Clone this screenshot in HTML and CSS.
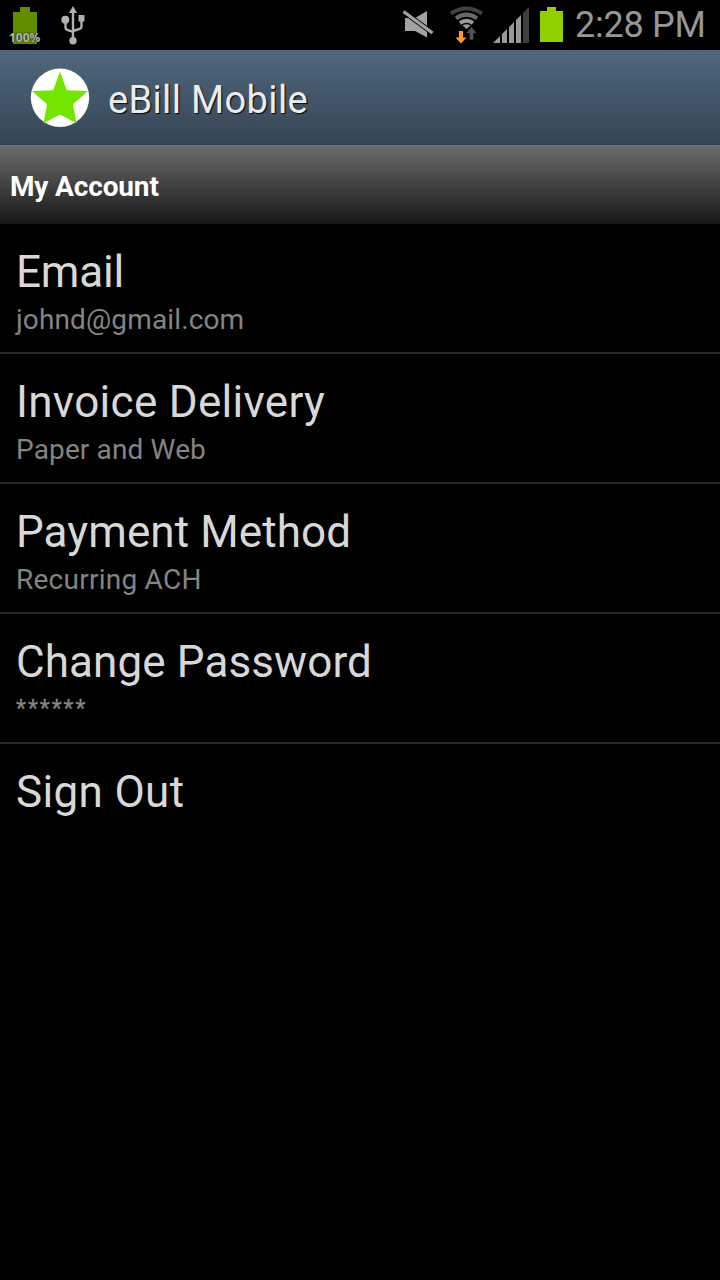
FILE: index.html
```html
<!DOCTYPE html>
<html lang="en">
<head>
<meta charset="utf-8">
<title>eBill Mobile</title>
<link rel="stylesheet" href="styles.css">
</head>
<body>
<div class="status">
  <div class="battery-level">
    <svg width="30" height="50" viewBox="0 0 30 50"><path fill="#628f00" d="M3 12h7V7h10v5h7v32H3z"/></svg>
    <span class="percent">100%</span>
  </div>
  <svg class="usb" width="28" height="50" viewBox="0 0 28 50">
    <g fill="none" stroke="#b0b0b0" stroke-width="2.400"><path d="M14 12v28M6.500 21v6.500q0 1.800 1.800 2.300l5.700 2M22.500 18v8.500q0 1.800-1.800 2.300L14 31"/></g>
    <path fill="#b0b0b0" d="M14 6l4 7h-8zM19.500 15h6v6.500h-6z"/><circle cx="6.300" cy="19.800" r="4" fill="#b0b0b0"/><circle cx="14" cy="40.800" r="3.700" fill="#b0b0b0"/>
  </svg>
  <svg class="mute" width="32" height="50" viewBox="0 0 32 50">
    <path fill="#a2a2a2" d="M3 18h10l12-7v26.500L13 31H3z"/>
    <path stroke="#000" stroke-width="5" d="M0 10.500l32 23.500"/>
    <path stroke="#a2a2a2" stroke-width="3.400" d="M1.500 11.500l29 21.500"/>
  </svg>
  <svg class="wifi" width="34" height="50" viewBox="0 0 34 50">
    <g fill="none" stroke-width="4"><path stroke="#404040" d="M2 13.500Q17.500 3.500 33 13.500"/><path stroke="#6a6a6a" d="M7 18.300Q17.500 11 28 18.300"/><path stroke="#999" d="M11 23q6.500-4.500 13 0"/></g>
    <path fill="#999" d="M13.500 25.500q4-2.500 8 0L17.500 29z"/>
    <path fill="#535353" stroke="#000" stroke-width=".6" d="M22.500 26.500l5.500 7h-3.300V40h-4.400v-6.500H17z"/>
    <path fill="#ff9b20" d="M10 31h4v6.500h3.500L12 43.500l-5.500-6H10z"/>
  </svg>
  <svg class="signal" width="36" height="50" viewBox="0 0 36 50">
    <path fill="#999" d="M0 43l7-7v7zM9 34l5-5v14H9zM16 27l5-5v21h-5zM23 20l5-5v28h-5z"/><path fill="#3f3f3f" d="M30 13l6-6v36h-6z"/>
  </svg>
  <svg class="battery" width="23" height="50" viewBox="0 0 23 50"><path fill="#91cf00" d="M0 11h7V7h9v4h7v31H0z"/></svg>
  <span class="clock">2:28 PM</span>
</div>
<header class="appbar">
  <svg class="logo" width="60" height="60" viewBox="0 0 60 60"><circle cx="30" cy="29.700" r="29.200" fill="#fff"/><path fill="#73e600" d="M30 3.500l6.800 18.800 21.200.8-15 13.200 3.500 19L30 46.500 13.500 55.300 17 36.300 2 23.100l21.200-.8z"/></svg>
  <h1 class="app-title">eBill Mobile</h1>
</header>
<h2 class="section">My Account</h2>
<ul class="list">
  <li class="row"><span class="name email">Email</span><span class="value">johnd@gmail.com</span></li>
  <li class="row"><span class="name delivery">Invoice Delivery</span><span class="value">Paper and Web</span></li>
  <li class="row"><span class="name">Payment Method</span><span class="value recurring">Recurring ACH</span></li>
  <li class="row"><span class="name">Change Password</span><span class="value masked">******</span></li>
  <li class="row"><span class="name signout">Sign Out</span></li>
</ul>
</body>
</html>
```
FILE: styles.css
```css
* { box-sizing: border-box; }
body { margin: 0; min-height: 1280px; background: #000; font-family: Roboto, sans-serif; overflow: hidden; }
svg { display: block; flex: none; }
.status { height: 50px; display: flex; padding: 0 14px 0 10px; }
.battery-level { position: relative; width: 30px; }
.percent { position: absolute; left: -1px; top: 31px; font: 700 12px/14px "Open Sans", sans-serif; color: #b4b4b4; text-shadow: 0 0 2px #000; }
.usb { margin-left: 19px; }
.mute { margin-left: auto; }
.wifi { margin-left: 15px; }
.signal { margin-left: 10px; }
.battery { margin-left: 11px; }
.clock { width: 131px; margin-left: 12px; font-size: 36px; line-height: 51px; letter-spacing: -.25px; color: #969696; white-space: nowrap; }
.appbar { height: 95px; display: flex; align-items: center; padding-left: 30px; background: linear-gradient(#50677d, #354553); }
.logo { margin-right: 18px; }
.app-title { margin: 5px 0 0; font-size: 38px; font-weight: 400; line-height: 50px; letter-spacing: .35px; color: #ebebeb; text-shadow: 1px 1px 1px #111, 1px 1px 0 #222; }
.section { margin: 0; height: 79px; padding: 1px 0 0 10px; border-top: 1px solid #60798a; background: linear-gradient(#6b6b6b, #181818); color: #fff; font-size: 28px; line-height: 80px; letter-spacing: -.15px; font-weight: 700; }
.list { margin: 0; padding: 0; list-style: none; }
.row { height: 130px; display: flex; flex-direction: column; gap: 5px; padding: 22px 16px 0; border-bottom: 2px solid #282828; }
.row:last-child { border-bottom: 0; }
.name { font-size: 44px; line-height: 52px; letter-spacing: .1px; color: #d8d8d8; }
.name.email { letter-spacing: -.2px; }
.name.delivery { letter-spacing: .3px; }
.name.signout { letter-spacing: .35px; }
.value { font-size: 28px; line-height: 34px; letter-spacing: .14px; color: #848484; }
.value.recurring { letter-spacing: .25px; }
.value.masked { font-size: 23px; letter-spacing: 2px; line-height: 32px; -webkit-text-stroke: .3px #848484; }
```
